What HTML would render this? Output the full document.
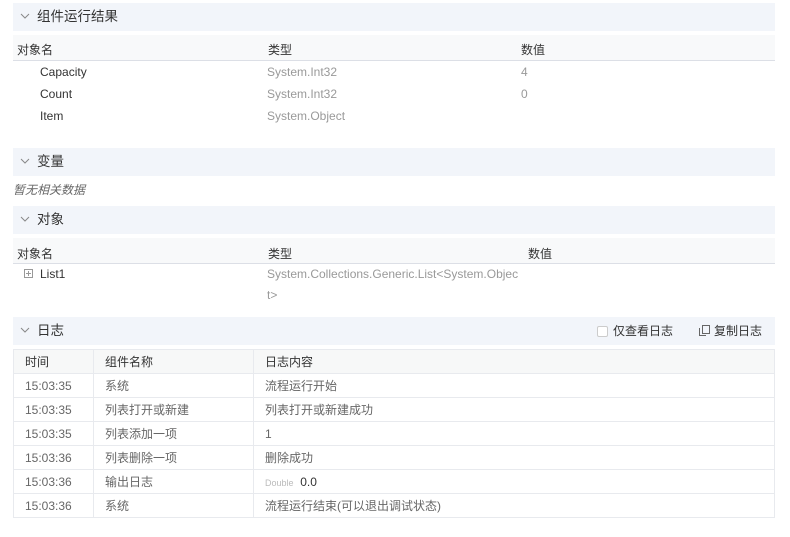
<!DOCTYPE html>
<html><head><meta charset="utf-8"><style>
*{margin:0;padding:0;box-sizing:border-box}
body{width:790px;height:537px;background:#fff;font-family:"Liberation Sans","Noto Sans CJK SC",sans-serif;font-size:12px;color:#333;position:relative;overflow:hidden}
.a{position:absolute;white-space:nowrap}
.hd{position:absolute;left:13px;width:762px;height:28px;background:#f2f5fa;font-size:13.5px;line-height:28px;padding-left:24px;color:#333}
.hd svg.c{position:absolute;left:7px;top:10px}
.th{position:absolute;left:13px;width:762px;height:26px;background:#f8f9fa;border-bottom:1px solid #dcdfe6}
.g{color:#999}
table{position:absolute;left:13px;top:349px;width:762px;border-collapse:collapse}
td{border:1px solid #e8eaee;height:24px;padding-left:11px;color:#666}
tr.h td{background:#f7f8f8;color:#333}
</style></head><body>
<div class="hd" style="top:3px"><svg class="c" width="10" height="6"><path d="M1 1L5 5L9 1" fill="none" stroke="#888"/></svg>组件运行结果</div>
<div class="th" style="top:35px"></div>
<div class="a" style="left:17px;top:41px">对象名</div>
<div class="a" style="left:268px;top:41px">类型</div>
<div class="a" style="left:521px;top:41px">数值</div>
<div class="a" style="left:40px;top:65px">Capacity</div><div class="a g" style="left:267px;top:65px">System.Int32</div><div class="a g" style="left:521px;top:65px">4</div>
<div class="a" style="left:40px;top:87px">Count</div><div class="a g" style="left:267px;top:87px">System.Int32</div><div class="a g" style="left:521px;top:87px">0</div>
<div class="a" style="left:40px;top:109px">Item</div><div class="a g" style="left:267px;top:109px">System.Object</div>

<div class="hd" style="top:148px"><svg class="c" width="10" height="6"><path d="M1 1L5 5L9 1" fill="none" stroke="#888"/></svg>变量</div>
<div class="a" style="left:13px;top:181px;font-style:italic;color:#666">暂无相关数据</div>

<div class="hd" style="top:206px"><svg class="c" width="10" height="6"><path d="M1 1L5 5L9 1" fill="none" stroke="#888"/></svg>对象</div>
<div class="th" style="top:238px"></div>
<div class="a" style="left:17px;top:245px">对象名</div>
<div class="a" style="left:268px;top:245px">类型</div>
<div class="a" style="left:528px;top:245px">数值</div>
<svg class="a" style="left:24px;top:269px" width="9" height="9"><rect x=".5" y=".5" width="8" height="8" fill="none" stroke="#999"/><path d="M2 4.5H7M4.5 2V7" stroke="#999"/></svg>
<div class="a" style="left:40px;top:267px">List1</div>
<div class="a g" style="left:267px;top:267px">System.Collections.Generic.List&lt;System.Objec</div>
<div class="a g" style="left:267px;top:288px">t&gt;</div>

<div class="hd" style="top:317px"><svg class="c" width="10" height="6"><path d="M1 1L5 5L9 1" fill="none" stroke="#888"/></svg>日志
<span class="a" style="left:584px;top:0;font-size:12px"><span style="display:inline-block;width:11px;height:11px;border:1px solid #ccc;background:#fff;border-radius:2px;vertical-align:-2px;margin-right:5px"></span>仅查看日志</span>
<svg class="a" style="left:686px;top:8px" width="11" height="12"><rect x="3.5" y=".5" width="7" height="8" fill="none" stroke="#666"/><path d="M.5 3V10.5H7" fill="none" stroke="#666"/></svg>
<span class="a" style="left:701px;top:0;font-size:12px">复制日志</span></div>
<table>
<colgroup><col style="width:80px"><col style="width:160px"><col></colgroup>
<tr class="h"><td>时间</td><td>组件名称</td><td>日志内容</td></tr>
<tr><td>15:03:35</td><td>系统</td><td>流程运行开始</td></tr>
<tr><td>15:03:35</td><td>列表打开或新建</td><td>列表打开或新建成功</td></tr>
<tr><td>15:03:35</td><td>列表添加一项</td><td>1</td></tr>
<tr><td>15:03:36</td><td>列表删除一项</td><td>删除成功</td></tr>
<tr><td>15:03:36</td><td>输出日志</td><td><span style="font-size:9px;color:#bbb">Double</span>&nbsp; <span style="color:#333">0.0</span></td></tr>
<tr><td>15:03:36</td><td>系统</td><td>流程运行结束(可以退出调试状态)</td></tr>
</table>
</body></html>
